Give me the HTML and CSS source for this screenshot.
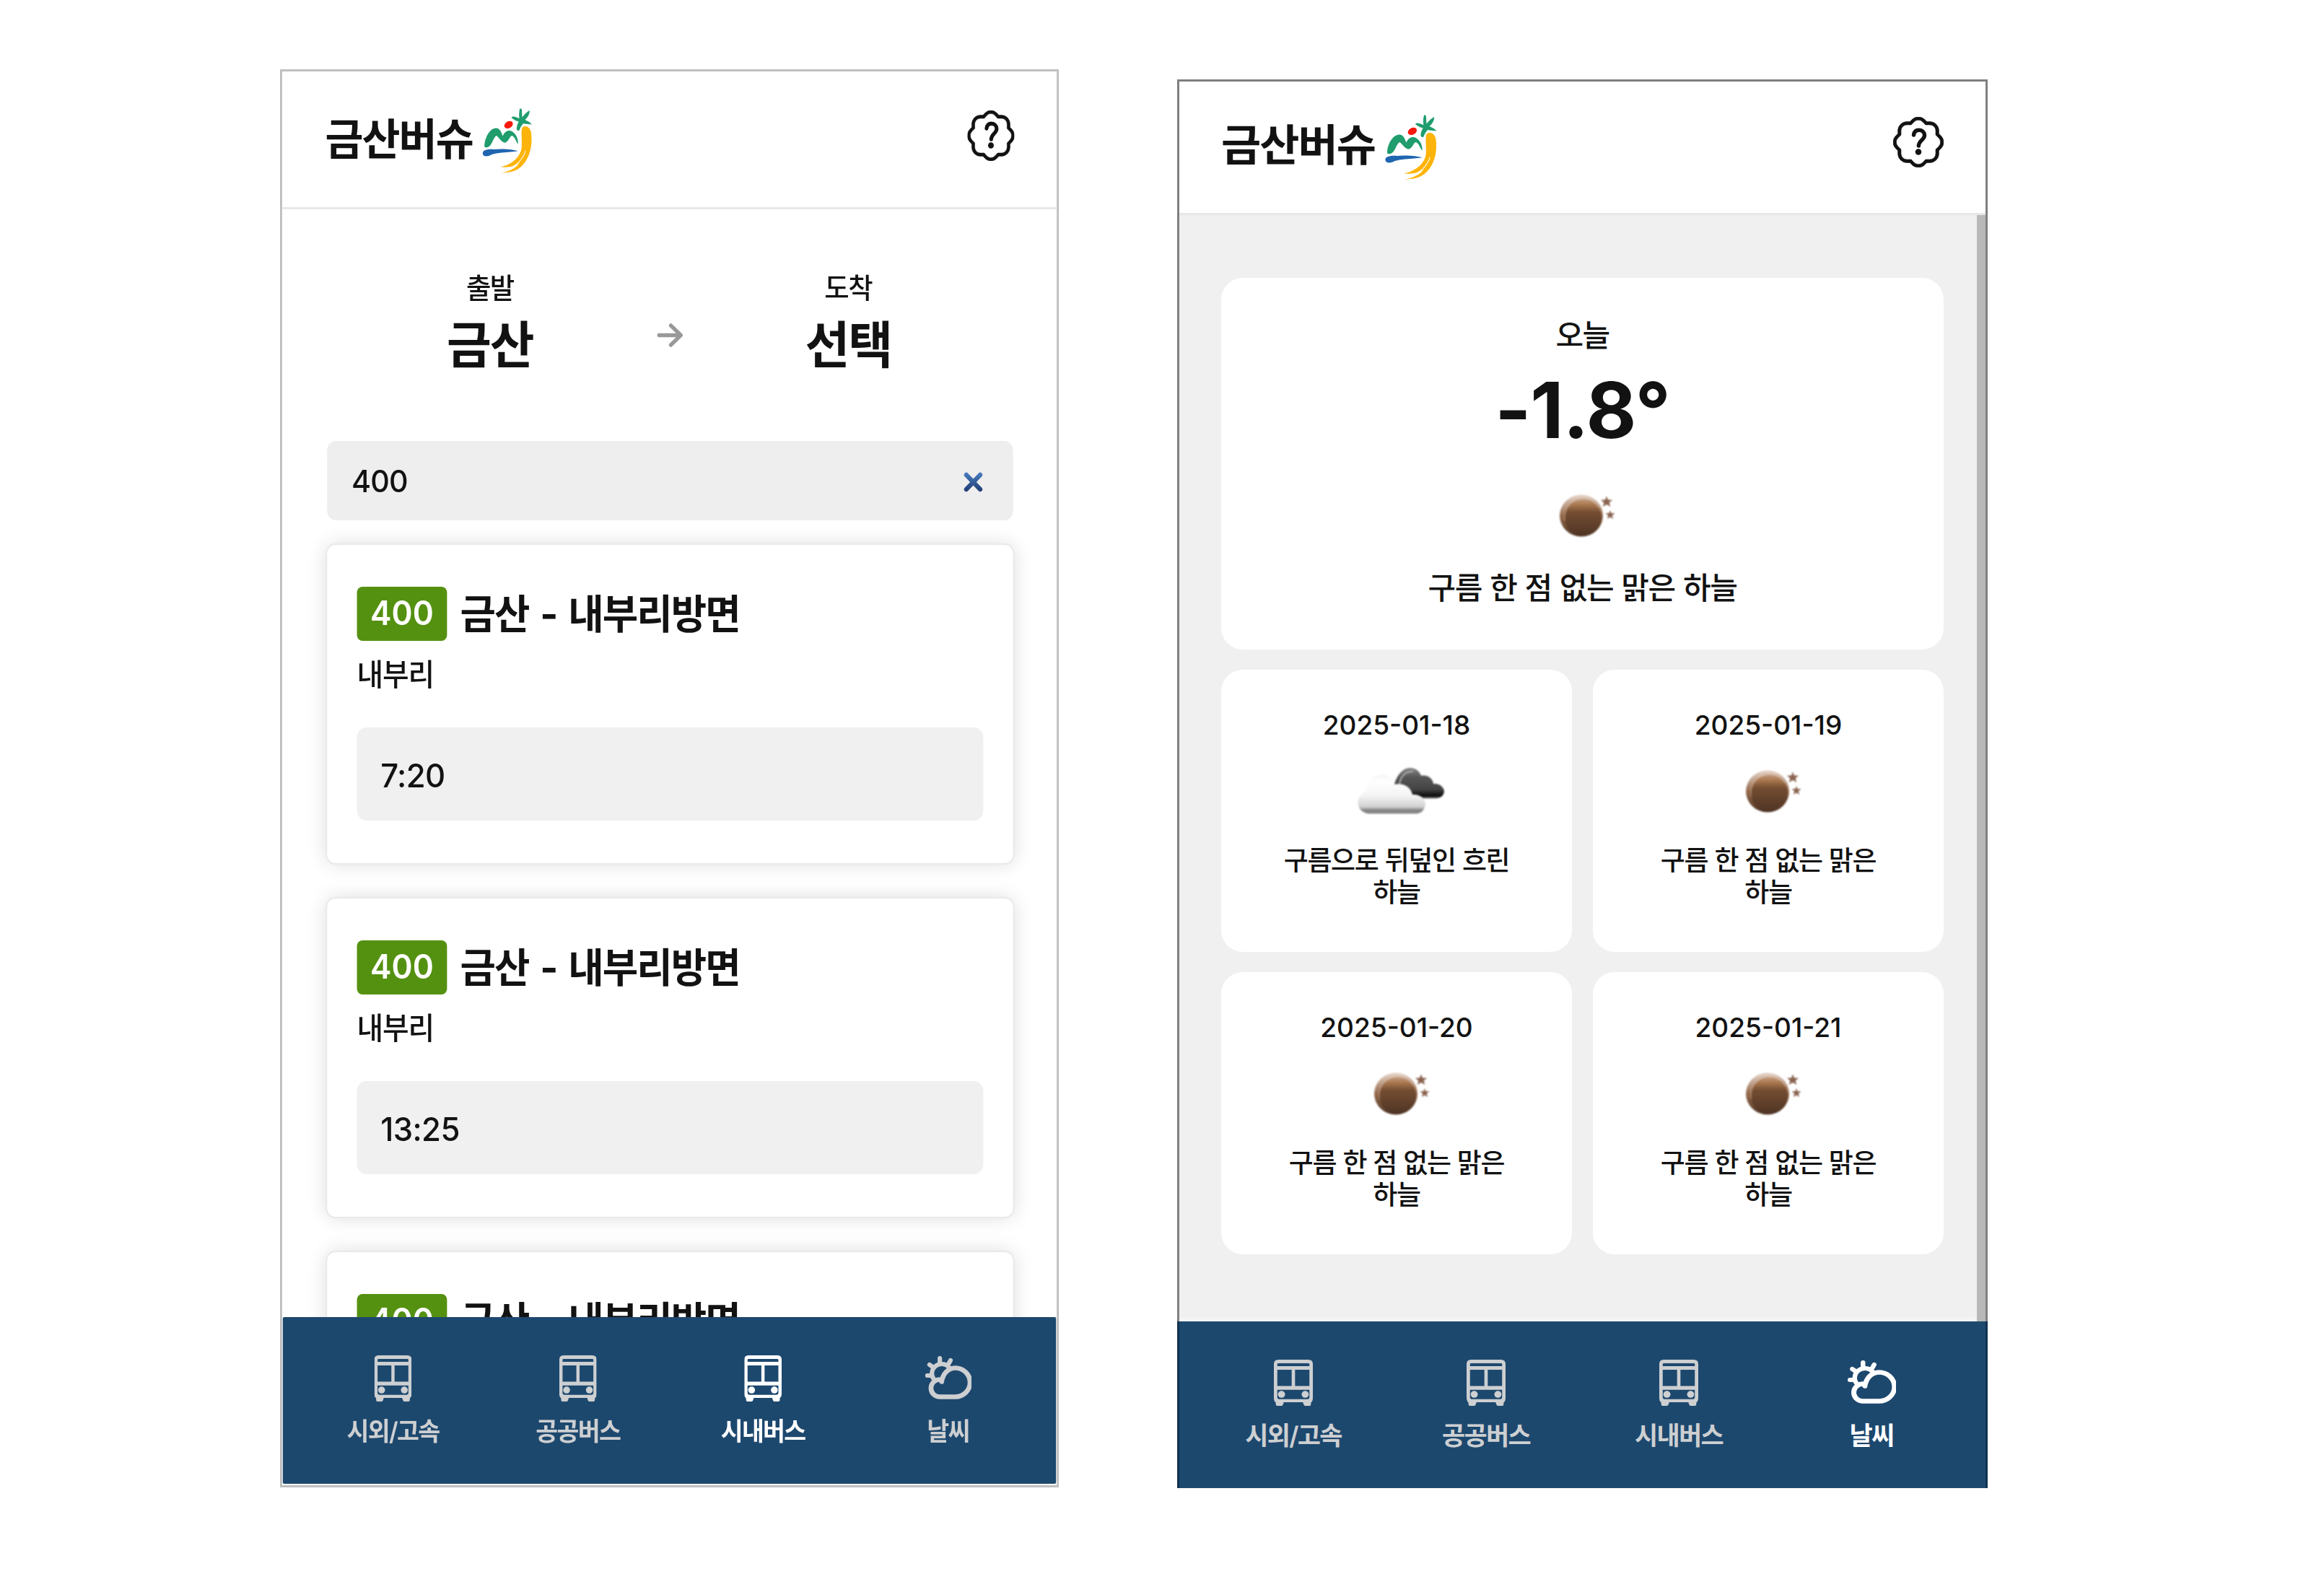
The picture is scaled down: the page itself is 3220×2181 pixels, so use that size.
FILE: index.html
```html
<!DOCTYPE html>
<html lang="ko">
<head>
<meta charset="utf-8">
<title>금산버슈</title>
<link rel="stylesheet" href="styles.css">
</head>
<body>
<svg class="defs" aria-hidden="true">
  <defs>
    <linearGradient id="g-moon" x1="0" y1="0" x2="0" y2="1"><stop offset="0" stop-color="#c59c80"/><stop offset=".15" stop-color="#a9784f"/><stop offset=".36" stop-color="#744d32"/><stop offset="1" stop-color="#4f3424"/></linearGradient>
    <linearGradient id="g-rim" x1="0" y1="0" x2="0" y2="1"><stop offset="0" stop-color="#e8d6ca"/><stop offset=".5" stop-color="#94694b"/><stop offset="1" stop-color="#4f3424"/></linearGradient>
    <linearGradient id="g-dark" x1="0" y1="0" x2="0" y2="1"><stop offset="0" stop-color="#888"/><stop offset=".3" stop-color="#565656"/><stop offset=".7" stop-color="#444"/><stop offset=".92" stop-color="#080808"/><stop offset="1" stop-color="#888"/></linearGradient>
    <linearGradient id="g-light" x1="0" y1="0" x2="0" y2="1"><stop offset="0" stop-color="#f5f5f5"/><stop offset=".2" stop-color="#fff"/><stop offset=".55" stop-color="#f3f3f3"/><stop offset=".82" stop-color="#d2d2d2"/><stop offset=".92" stop-color="#808080"/><stop offset="1" stop-color="#8c8c8c"/></linearGradient>
    <linearGradient id="g-x" gradientUnits="userSpaceOnUse" x1="0" y1="0" x2="0" y2="28"><stop offset="0" stop-color="#4a7fc4"/><stop offset="1" stop-color="#1d3a70"/></linearGradient>
  </defs>
  <symbol id="logo" viewBox="53 28 207 272" preserveAspectRatio="none">
    <g fill="#1f9d6d">
      <path d="M62 190C60 158 82 111 110 111C127 112 131 128 138 144C147 122 164 117 178 126C194 136 203 158 201 178C190 166 190 148 175 143C166 146 161 171 146 172C131 170 123 150 111 143C98 150 93 186 76 191Q66 194 62 190Z"/>
      <path d="M208 82Q202 50 209 29Q217 28 217 40L218 66Q230 48 248 37Q252 48 238 68L230 76Q246 82 259 96L222 92Q212 104 206 121Q196 124 195 112Q196 98 204 84Q188 80 174 68Q174 62 184 63Q198 66 208 72Z"/>
    </g>
    <ellipse cx="162" cy="97" rx="19" ry="14" fill="#f7190d" transform="rotate(-32 162 97)"/>
    <path fill="#1f65b0" d="M54 216C56 203 72 199 100 200C140 196 180 200 201 207C180 213 110 210 84 226C66 232 55 228 54 216Z"/>
    <path fill="#fdb40a" d="M219 108C232 98 250 104 255 128C264 190 246 245 210 276C185 297 155 297 132 299C165 292 192 280 209 254C190 272 155 278 128 273C165 268 200 243 213 207C222 180 210 130 219 108Z"/>
    <path fill="none" stroke="#fff" stroke-width="3" d="M232 206C222 240 195 270 150 287"/>
  </symbol>
  <symbol id="help" viewBox="0 0 70 70" preserveAspectRatio="none">
    <path transform="scale(4.375)" fill="#121212" stroke="#121212" stroke-width=".14" d="m10.273 2.513-.921-.944.715-.698.622.637.89-.011a2.89 2.89 0 0 1 2.924 2.924l-.01.89.636.622a2.89 2.89 0 0 1 0 4.134l-.637.622.011.89a2.89 2.89 0 0 1-2.924 2.924l-.89-.01-.622.636a2.89 2.89 0 0 1-4.134 0l-.622-.637-.89.011a2.89 2.89 0 0 1-2.924-2.924l.01-.89-.636-.622a2.89 2.89 0 0 1 0-4.134l.637-.622-.011-.89a2.89 2.89 0 0 1 2.924-2.924l.89.01.622-.636a2.89 2.89 0 0 1 4.134 0l-.715.698a1.89 1.89 0 0 0-2.704 0l-.92.944-1.32-.016a1.89 1.89 0 0 0-1.911 1.912l.016 1.318-.944.921a1.89 1.89 0 0 0 0 2.704l.944.92-.016 1.32a1.89 1.89 0 0 0 1.912 1.911l1.318-.016.921.944a1.89 1.89 0 0 0 2.704 0l.92-.944 1.32.016a1.89 1.89 0 0 0 1.911-1.912l-.016-1.318.944-.921a1.89 1.89 0 0 0 0-2.704l-.944-.92.016-1.32a1.89 1.89 0 0 0-1.912-1.911z"/>
    <path fill="none" stroke="#121212" stroke-width="5.4" stroke-linecap="round" d="M28.5 25C29.2 20.300 32 18.300 35.800 18.300C40.500 18.300 43.500 21.500 43.500 25.500C43.500 31.500 35.400 33 35.400 40"/>
    <circle cx="35" cy="48.500" r="4.300" fill="#121212"/>
  </symbol>
  <symbol id="bus" viewBox="0 0 51 63" preserveAspectRatio="none">
    <path fill="currentColor" fill-rule="evenodd" d="M6 0H45Q51 0 51 6V52Q51 57 48.5 58.5V61Q48.5 63 46.5 63H41Q39.500 63 39 61L38 58H13L12 61Q11.500 63 10 63H4.500Q2.500 63 2.500 61V58.500Q0 57 0 52V6Q0 0 6 0ZM6 4.800Q4.500 4.800 4.500 6V8.800H46.500V6Q46.500 4.800 45 4.800ZM4.500 13.700V36H23.300V13.700ZM27.700 13.700V36H46.500V13.700ZM4.500 41V51.500Q4.500 53.800 7 53.800H44Q46.500 53.800 46.500 51.500V41Z"/>
    <circle cx="10" cy="47.300" r="4.700" fill="currentColor"/><circle cx="41" cy="47.300" r="4.700" fill="currentColor"/>
  </symbol>
  <symbol id="sky" viewBox="0 0 63 61" preserveAspectRatio="none">
    <g fill="none" stroke="currentColor" stroke-width="6.5" stroke-linecap="round">
      <path d="M22.500 35.500C24 25 31 16.500 41 16.500A20 20 0 0 1 41 56.500H20.500A12 12 0 0 1 19.500 32.500"/>
      <path d="M12.500 33A12 12 0 0 1 32.500 15.500" stroke-width="6"/>
      <path d="M20 3V9M34.500 6L31.500 11.500M6 12L11 15.500M3 27H9" stroke-width="6"/>
    </g>
  </symbol>
  <symbol id="moon" viewBox="0 0 130 64">
    <ellipse cx="63" cy="32.500" rx="30" ry="29" fill="url(#g-rim)"/>
    <ellipse cx="65.500" cy="35" rx="25.500" ry="25.500" fill="url(#g-moon)" stroke="#c9a88e" stroke-width=".8" stroke-dasharray="70 200" stroke-dashoffset="-75"/>
    <path fill="#8a6450" d="M98 5.500l2 5 6 .3-4.300 3.700 1.600 5.500-5.300-3-5.300 3 1.600-5.500-4.300-3.700 6-.3zM103 25l1.500 4 5 .3-3.700 3 1.300 4.700-4.100-2.500-4.100 2.500 1.300-4.700-3.700-3 5-.3z"/>
  </symbol>
  <symbol id="clouds" viewBox="0 0 130 64">
    <path fill="url(#g-dark)" d="M61 22C66 7 74 0 83 0C91 0 96 5 98 11C106 9 114 14 115 22C124 21 130 27 130 33C129 39 124 42.500 118 42.500H80Z"/>
    <path fill="none" stroke="#aaa" stroke-width="2" d="M68 22C70 10 78 4 87 5"/>
    <path fill="url(#g-light)" d="M24 63.500C14 61 10 54 10.500 46C12 38 18 34 22 31C24 16 34 9 43 9C52 9 59 15 61 23C72 20 84 26 86 37C97 36 104 43 104 50C103 58 99 62 93 63.500Z"/>
  </symbol>
</svg>

<div class="stage">
  <div class="squeeze">
    <section class="phone phone-bus">
      <header class="top">
        <h1 class="brand">금산버슈</h1>
        <svg class="logo"><use href="#logo"/></svg>
        <svg class="help"><use href="#help"/></svg>
      </header>
      <main class="bus-main">
        <div class="route">
          <div class="stop"><span class="stop-label">출발</span><strong class="stop-name">금산</strong></div>
          <svg class="arrow" viewBox="0 0 38 33"><path d="M3 16.500H34M20 3L34.500 16.500L20 30"/></svg>
          <div class="stop"><span class="stop-label">도착</span><strong class="stop-name">선택</strong></div>
        </div>
        <div class="search"><span>400</span><svg class="clear" viewBox="0 0 28 28"><path d="M4 4L24 24M24 4L4 24"/></svg></div>
        <div class="cards">
          <article class="card">
            <div class="card-head"><span class="num">400</span><h2 class="title">금산 - 내부리방면</h2></div>
            <p class="via">내부리</p>
            <div class="time">7:20</div>
          </article>
          <article class="card">
            <div class="card-head"><span class="num">400</span><h2 class="title">금산 - 내부리방면</h2></div>
            <p class="via">내부리</p>
            <div class="time">13:25</div>
          </article>
          <article class="card">
            <div class="card-head"><span class="num">400</span><h2 class="title">금산 - 내부리방면</h2></div>
          </article>
        </div>
      </main>
      <nav class="tabs">
        <a class="tab"><svg class="ico-bus"><use href="#bus"/></svg>시외/고속</a>
        <a class="tab"><svg class="ico-bus"><use href="#bus"/></svg>공공버스</a>
        <a class="tab active"><svg class="ico-bus"><use href="#bus"/></svg>시내버스</a>
        <a class="tab"><svg class="ico-sky"><use href="#sky"/></svg>날씨</a>
      </nav>
    </section>
  </div>

  <section class="phone phone-weather">
    <header class="top">
      <h1 class="brand">금산버슈</h1>
      <svg class="logo"><use href="#logo"/></svg>
      <svg class="help"><use href="#help"/></svg>
    </header>
    <main class="weather-main">
      <div class="forecast">
        <article class="today">
          <p class="day">오늘</p>
          <p class="temp">-1.8°</p>
          <svg class="wx"><use href="#moon"/></svg>
          <p class="desc">구름 한 점 없는 맑은 하늘</p>
        </article>
        <article class="next"><p class="date">2025-01-18</p><svg class="wx"><use href="#clouds"/></svg><p class="desc">구름으로 뒤덮인 흐린 하늘</p></article>
        <article class="next"><p class="date">2025-01-19</p><svg class="wx"><use href="#moon"/></svg><p class="desc">구름 한 점 없는 맑은 하늘</p></article>
        <article class="next"><p class="date">2025-01-20</p><svg class="wx"><use href="#moon"/></svg><p class="desc">구름 한 점 없는 맑은 하늘</p></article>
        <article class="next"><p class="date">2025-01-21</p><svg class="wx"><use href="#moon"/></svg><p class="desc">구름 한 점 없는 맑은 하늘</p></article>
      </div>
      <div class="scrollbar"></div>
    </main>
    <nav class="tabs">
      <a class="tab"><svg class="ico-bus"><use href="#bus"/></svg>시외/고속</a>
      <a class="tab"><svg class="ico-bus"><use href="#bus"/></svg>공공버스</a>
      <a class="tab"><svg class="ico-bus"><use href="#bus"/></svg>시내버스</a>
      <a class="tab active"><svg class="ico-sky"><use href="#sky"/></svg>날씨</a>
    </nav>
  </section>
</div>
</body>
</html>
```
FILE: styles.css
```css
* { box-sizing: border-box; margin: 0; padding: 0; }
body {
  background: #fff;
  color: #121212;
  font-family: Inter, "Noto Sans CJK KR", sans-serif;
  font-weight: 500;
}
svg { display: block; flex: none; }
.defs { position: absolute; width: 0; height: 0; }

.stage { display: flex; align-items: flex-start; gap: 164px; height: 2181px; padding-left: 388px; overflow: hidden; }
.squeeze { width: 1079px; margin-top: 96px; }
.phone { display: flex; flex-direction: column; border: 3px solid #bfbfbf; background: #fff; }
.phone-bus { width: 1124px; height: 1965px; padding-bottom: 2px; transform: scaleX(.96); transform-origin: 0 0; }
.phone-weather { width: 1123px; height: 1952px; margin-top: 110px; border-color: #7f7f7f; border-bottom: 0; }

/* header */
.top { display: flex; align-items: center; flex: none; height: 191px; padding: 0 61px 0 62px; border-bottom: 3px solid #e8e8e8; }
.phone-weather .top { height: 182px; padding: 0 58px 4px 58px; border-bottom: 0; }
.brand { font-size: 60px; line-height: 80px; font-weight: 700; letter-spacing: -.033em; white-space: nowrap; }
.phone-weather .brand { margin-bottom: 2px; }
.logo { width: 72px; height: 90px; margin: 4px 0 0 14px; }
.help { width: 70px; height: 70px; margin: 0 0 10px auto; }
.phone-bus .help { width: 68px; }

/* bus timetable */
.bus-main { flex: none; height: 1535px; padding: 86px 63px 0 65px; overflow: hidden; }
.route { display: grid; grid-template-columns: 470px 1fr 476px; justify-items: center; align-items: start; height: 145px; }
.stop { display: flex; flex-direction: column; align-items: center; gap: 14px; }
.stop-label { font-size: 39px; line-height: 46px; letter-spacing: -.04em; }
.stop-name { font-size: 70px; line-height: 86px; font-weight: 700; letter-spacing: -.03em; }
.arrow { width: 38px; height: 33px; margin: 72px 0 0 6px; }
.arrow path { fill: none; stroke: #999; stroke-width: 5.5; stroke-linecap: round; stroke-linejoin: round; }
.search { display: flex; align-items: center; justify-content: space-between; height: 110px; margin-top: 90px; padding: 0 43px 1px 35px; border-radius: 13px; background: #eee; font-size: 43px; letter-spacing: -.02em; }
.clear { width: 29px; height: 28px; margin-top: 4px; }
.clear path { fill: none; stroke: url(#g-x); stroke-width: 6.5; stroke-linecap: round; }
.cards { display: flex; flex-direction: column; gap: 49px; margin-top: 34px; }
.card { flex: none; height: 441px; padding: 58px 43px 0; border-radius: 12px; background: #fff; box-shadow: 0 0 0 2px #e9e9e9, 0 0 28px rgba(0, 0, 0, .15); }
.card-head { display: flex; align-items: center; gap: 19px; height: 75px; }
.num { width: 130px; height: 75px; border-radius: 8px; background: #559111; color: #fff; font-size: 46px; line-height: 72px; font-weight: 600; text-align: center; }
.title { font-size: 56px; line-height: 76px; font-weight: 700; letter-spacing: -.036em; word-spacing: .09em; white-space: nowrap; }
.via { margin-top: 22px; font-size: 41.500px; line-height: 50px; letter-spacing: -.03em; }
.time { height: 129px; margin-top: 48px; padding-left: 34px; border-radius: 14px; background: #f0f0f0; font-size: 45.500px; line-height: 134px; letter-spacing: -.014em; }

/* weather */
.weather-main { display: flex; flex: none; height: 1536px; background: #f0f0f0; box-shadow: inset 0 4px 4px -2px #e2e2e2, inset 0 -5px 0 #f5f5f5; }
.forecast { display: grid; grid-template-columns: 486px 486px; grid-template-rows: 515px 391px 391px; gap: 28px 29px; flex: 1; padding: 90px 46px 0 58px; }
.scrollbar { width: 12px; margin-top: 3px; background: #b8b8b8; }
.today, .next { display: flex; flex-direction: column; align-items: center; border-radius: 30px; background: #fff; text-align: center; padding-top: 55px; word-break: keep-all; }
.today { grid-column: 1 / 3; }
.day { font-size: 42px; line-height: 50px; letter-spacing: -.04em; }
.temp { margin-top: 23px; font-size: 107.500px; line-height: 110px; font-weight: 700; letter-spacing: -.01em; }
.wx { width: 130px; height: 64px; filter: blur(.8px); }
.today .wx { margin-top: 59px; }
.today .desc { margin-top: 44px; font-size: 42px; line-height: 50px; letter-spacing: -.033em; word-spacing: .03em; }
.next { padding: 55px 64px 0; }
.date { font-size: 37px; line-height: 44px; }
.next .wx { margin: 37px 0 0 2px; }
.next .desc { margin-top: 43px; font-size: 37px; line-height: 43.500px; letter-spacing: -.037em; word-spacing: .02em; }

/* bottom tabs */
.tabs { display: grid; grid-template-columns: repeat(4, 267px); justify-content: center; flex: none; height: 231px; margin: 0 1px; padding: 53px 0 0 3px; border-radius: 2px; background: #1d486e; }
.phone-weather .tabs { margin: 0 -3px; padding-left: 0; border: solid #123250; border-width: 0 3px; border-radius: 0; }
.tab { display: flex; flex-direction: column; align-items: center; color: #cdcfd1; font-size: 35px; line-height: 42px; font-weight: 600; letter-spacing: -.05em; white-space: nowrap; }
.tab.active { color: #fff; font-weight: 700; }
.tab svg { height: 64px; margin-bottom: 20px; }
.ico-bus { width: 54px; }
.ico-sky { width: 67px; padding: 1px 0 2px; }
```
